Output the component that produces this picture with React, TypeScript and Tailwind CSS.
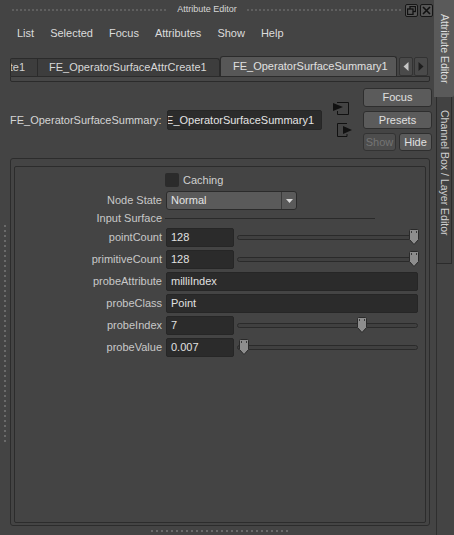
import React from 'react';

const font = "font-['Liberation_Sans',Arial,sans-serif]";

const SliderHandle: React.FC = () => (
  <svg width="10" height="16" viewBox="0 0 10 16">
    <path d="M1.5 0.5 H8.5 Q9.5 0.5 9.5 1.5 V10.5 L5 15.5 L0.5 10.5 V1.5 Q0.5 0.5 1.5 0.5 Z" fill="#8d8d8d" stroke="#2a2a2a" />
    <rect x="2" y="2" width="1" height="2" fill="#3a3a3a" />
    <rect x="7" y="2" width="1" height="2" fill="#3a3a3a" />
  </svg>
);

const Field: React.FC<{ value: string; className?: string }> = ({ value, className = '' }) => (
  <div className={`h-[19px] bg-[#2b2b2b] border border-[#262626] rounded-[2px] flex items-center pl-[4px] text-[#e0e0e0] ${className}`}>
    {value}
  </div>
);

const Slider: React.FC<{ pos: number }> = ({ pos }) => (
  <div className="relative w-[181px] h-[19px] ml-[3px] flex items-center">
    <div className="w-full h-[5px] border border-[#2a2a2a] rounded-full bg-[#404040]" />
    <div className="absolute top-[1px]" style={{ left: pos }}>
      <SliderHandle />
    </div>
  </div>
);

const Row: React.FC<{ label: string; children: React.ReactNode }> = ({ label, children }) => (
  <div className="flex items-center h-[19px]">
    <div className="w-[151px] text-right pr-[4px] text-[#c8c8c8] whitespace-nowrap">{label}</div>
    {children}
  </div>
);

const App: React.FC = () => {
  return (
    <div className={`w-[454px] h-[535px] bg-[#444444] flex overflow-hidden text-[11px] ${font}`}>
      {/* main column */}
      <div className="w-[434px] flex flex-col">
        {/* Title bar */}
        <div className="h-[20px] flex items-center pl-[12px] pr-[1px]">
          <div className="flex-1 h-[2px] bg-[repeating-linear-gradient(to_right,#5f5f5f_0_2px,transparent_2px_4px)]" />
          <div className="px-[10px] text-[9px] text-[#d6d6d6]">Attribute Editor</div>
          <div className="flex-1 h-[2px] bg-[repeating-linear-gradient(to_right,#5f5f5f_0_2px,transparent_2px_4px)]" />
          <div className="ml-[3px] w-[13px] h-[13px] rounded-[2px] border border-[#161616] bg-[#555] flex items-center justify-center">
            <svg width="9" height="9" viewBox="0 0 9 9">
              <rect x="3" y="0.5" width="5.5" height="5" fill="none" stroke="#111" strokeWidth="1.3" />
              <rect x="0.5" y="3" width="5.5" height="5.5" fill="#555" stroke="#111" strokeWidth="1.3" />
            </svg>
          </div>
          <div className="ml-[2px] w-[13px] h-[13px] rounded-[2px] border border-[#161616] bg-[#555] flex items-center justify-center">
            <svg width="9" height="9" viewBox="0 0 9 9">
              <path d="M1 1 L8 8 M8 1 L1 8" stroke="#111" strokeWidth="1.6" />
            </svg>
          </div>
        </div>

        {/* Menu bar */}
        <div className="h-[26px] flex items-center pl-[17px] gap-[16px] text-[#dcdcdc]">
          <span>List</span>
          <span>Selected</span>
          <span>Focus</span>
          <span>Attributes</span>
          <span>Show</span>
          <span>Help</span>
        </div>

        {/* Tabs */}
        <div className="mt-[10px] ml-[10px] w-[420px]">
          <div className="h-[20px] flex items-end">
            <div className="w-[28px] h-[18px] overflow-hidden flex justify-end items-center pr-[12px] bg-[#3d3d3d] border border-b-0 border-[#2b2b2b] rounded-tl-[2px] text-[#d0d0d0] whitespace-nowrap">
              rate1
            </div>
            <div className="w-[182px] h-[18px] flex items-center pl-[11px] bg-[#3d3d3d] border border-l-0 border-b-0 border-[#2b2b2b] rounded-tr-[3px] text-[#d8d8d8] whitespace-nowrap">
              FE_OperatorSurfaceAttrCreate1
            </div>
            <div className="w-[177px] h-[20px] flex items-center pl-[12px] bg-[#575757] border border-b-0 border-[#2b2b2b] rounded-t-[3px] text-[#e0e0e0] whitespace-nowrap">
              FE_OperatorSurfaceSummary1
            </div>
            <div className="ml-[2px] w-[14px] h-[19px] bg-[#4a4a4a] border border-[#333] rounded-[2px] flex items-center justify-center">
              <svg width="6" height="9" viewBox="0 0 6 9"><path d="M5.5 0 L0.5 4.5 L5.5 9 Z" fill="#c6c6c6" /></svg>
            </div>
            <div className="ml-[1px] w-[14px] h-[19px] bg-[#4a4a4a] border border-[#333] rounded-[2px] flex items-center justify-center">
              <svg width="6" height="9" viewBox="0 0 6 9"><path d="M0.5 0 L5.5 4.5 L0.5 9 Z" fill="#1e1e1e" /></svg>
            </div>
          </div>
          <div className="h-[6px] border border-[#2b2b2b] rounded-b-[2px] bg-[#474747]" />
        </div>

        {/* Node name row */}
        <div className="mt-[6px] flex items-start">
          <div className="mt-[22px] ml-[10px] flex items-center">
            <div className="w-[157px] text-[#d4d4d4] whitespace-nowrap">FE_OperatorSurfaceSummary:</div>
            <div className="w-[155px] h-[20px] bg-[#2b2b2b] border border-[#262626] rounded-[2px] overflow-hidden flex justify-end items-center pr-[7px] text-[#e4e4e4] whitespace-nowrap">
              FE_OperatorSurfaceSummary1
            </div>
          </div>
          <div className="ml-[11px] mt-[14px] w-[30px] flex flex-col">
            <svg width="16" height="13" viewBox="0 0 16 13">
              <path d="M4 0.5 H15.5 V12.5 H4.5 V9" fill="none" stroke="#111" />
              <path d="M0 1 L10 5 L0 9 Z" fill="#111" />
            </svg>
            <svg className="ml-[4px] mt-[8px]" width="16" height="14" viewBox="0 0 16 14">
              <path d="M10 0.5 H0.5 V13.5 H10 V11" fill="none" stroke="#111" />
              <path d="M6 3 L15 7 L6 11 Z" fill="#111" />
            </svg>
          </div>
          <div className="w-[69px] flex flex-col text-[#e0e0e0]">
            <div className="h-[19px] bg-[#5b5b5b] border border-[#2e2e2e] rounded-[3px] flex items-center justify-center">Focus</div>
            <div className="mt-[4px] h-[18px] bg-[#5b5b5b] border border-[#2e2e2e] rounded-[3px] flex items-center justify-center">Presets</div>
            <div className="mt-[4px] h-[18px] flex gap-[3px]">
              <div className="w-[33px] bg-[#4d4d4d] border border-[#333] rounded-[3px] flex items-center justify-center text-[#747474]">Show</div>
              <div className="w-[33px] bg-[#5b5b5b] border border-[#2e2e2e] rounded-[3px] flex items-center justify-center">Hide</div>
            </div>
          </div>
        </div>

        {/* Frame area with left grip */}
        <div className="mt-[7px] flex">
          <div className="w-[10px] flex flex-col">
            <div className="ml-[4px] mt-[67px] w-[2px] h-[218px] bg-[repeating-linear-gradient(to_bottom,#6a6a6a_0_2px,transparent_2px_5px)]" />
          </div>
          <div className="w-[420px] h-[368px] border border-[#2c2c2c] rounded-[3px] pt-[7px] px-[3px] pb-[2px]">
            <div className="h-full border border-[#2c2c2c] rounded-[2px] flex flex-col">
              {/* Caching */}
              <div className="mt-[6px] h-[14px] flex items-center">
                <div className="ml-[150px] w-[14px] h-[14px] bg-[#2b2b2b] rounded-[2px]" />
                <span className="ml-[4px] text-[#d0d0d0]">Caching</span>
              </div>
              {/* Node State */}
              <div className="mt-[4px]">
                <Row label="Node State">
                  <div className="w-[131px] h-[19px] bg-[#5a5a5a] border border-[#2b2b2b] rounded-[3px] flex items-center">
                    <span className="flex-1 pl-[4px] text-[#e4e4e4]">Normal</span>
                    <div className="w-[15px] h-full border-l border-[#3a3a3a] flex items-center justify-center">
                      <svg width="7" height="4" viewBox="0 0 7 4"><path d="M0 0 H7 L3.5 4 Z" fill="#d8d8d8" /></svg>
                    </div>
                  </div>
                </Row>
              </div>
              {/* Input Surface */}
              <div className="h-[16px] flex items-center">
                <div className="w-[151px] text-right pr-[4px] text-[#c8c8c8]">Input Surface</div>
                <div className="-ml-[1px] w-[210px] h-px bg-[#2a2a2a]" />
              </div>
              {/* attributes */}
              <div className="mt-[2px] flex flex-col gap-[3px]">
                <Row label="pointCount">
                  <Field value="128" className="w-[68px]" />
                  <Slider pos={172} />
                </Row>
                <Row label="primitiveCount">
                  <Field value="128" className="w-[68px]" />
                  <Slider pos={172} />
                </Row>
                <Row label="probeAttribute">
                  <Field value="milliIndex" className="w-[252px]" />
                </Row>
                <Row label="probeClass">
                  <Field value="Point" className="w-[252px]" />
                </Row>
                <Row label="probeIndex">
                  <Field value="7" className="w-[68px]" />
                  <Slider pos={120} />
                </Row>
                <Row label="probeValue">
                  <Field value="0.007" className="w-[68px]" />
                  <Slider pos={2} />
                </Row>
              </div>
            </div>
          </div>
        </div>

        {/* bottom grip */}
        <div className="mt-[4px] ml-[151px] w-[137px] h-[2px] bg-[repeating-linear-gradient(to_right,#6a6a6a_0_2px,transparent_2px_5px)]" />
      </div>

      {/* right dock strip */}
      <div className="w-[20px] flex flex-col">
        <div className="h-[97px] bg-[#5a5a5a] rounded-br-[2px] flex justify-start items-center pt-[14px] text-[10.5px] text-[#dedede] [writing-mode:vertical-rl] whitespace-nowrap">
          Attribute Editor
        </div>
        <div className="ml-[2px] w-[16px] h-[167px] border border-t-0 border-[#2b2b2b] bg-[#424242] flex justify-start items-center pt-[13px] text-[10.5px] text-[#cfcfcf] [writing-mode:vertical-rl] whitespace-nowrap">
          Channel Box / Layer Editor
        </div>
        <div className="flex-1 ml-[2px] border-l border-[#2f2f2f]" />
      </div>
    </div>
  );
};

export default App;
